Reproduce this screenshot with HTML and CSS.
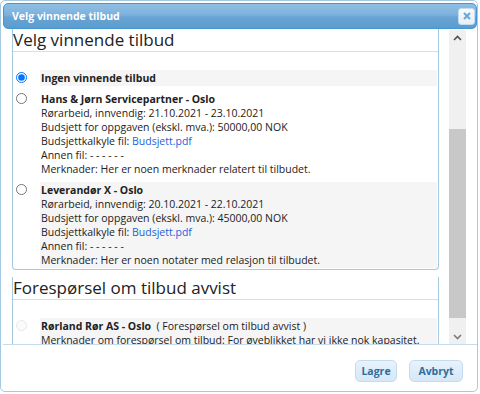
FILE: index.html
```html
<!DOCTYPE html>
<html lang="no">
<head>
  <meta charset="UTF-8">
  <title>Velg vinnende tilbud</title>
  <link rel="stylesheet" href="styles.css">
</head>
<body>
  <div class="dialog">
    <div class="titlebar">
      <span class="title">Velg vinnende tilbud</span>
      <button class="close" title="Lukk">
        <svg width="8" height="8" viewBox="0 0 8 8"><path d="M1 1L7 7M7 1L1 7" stroke="#6aa5d6" stroke-width="2"/></svg>
      </button>
    </div>

    <div class="body">
      <div class="scroll">
        <div class="group">
          <h2>Velg vinnende tilbud</h2>

          <div class="offer">
            <div class="pick"><input type="radio" name="winner" checked></div>
            <div class="info alt"><b>Ingen vinnende tilbud</b></div>
          </div>

          <div class="offer">
            <div class="pick"><input type="radio" name="winner"></div>
            <div class="info">
              <b>Hans &amp; Jørn Servicepartner - Oslo</b>
              <div>Rørarbeid, innvendig: 21.10.2021 - 23.10.2021</div>
              <div>Budsjett for oppgaven (ekskl. mva.): 50000,00 NOK</div>
              <div>Budsjettkalkyle fil: <a href="#">Budsjett.pdf</a></div>
              <div>Annen fil: - - - - - -</div>
              <div>Merknader: Her er noen merknader relatert til tilbudet.</div>
            </div>
          </div>

          <div class="offer">
            <div class="pick"><input type="radio" name="winner"></div>
            <div class="info alt">
              <b>Leverandør X - Oslo</b>
              <div>Rørarbeid, innvendig: 20.10.2021 - 22.10.2021</div>
              <div>Budsjett for oppgaven (ekskl. mva.): 45000,00 NOK</div>
              <div>Budsjettkalkyle fil: <a href="#">Budsjett.pdf</a></div>
              <div>Annen fil: - - - - - -</div>
              <div>Merknader: Her er noen notater med relasjon til tilbudet.</div>
            </div>
          </div>
        </div>

        <div class="group">
          <h2>Forespørsel om tilbud avvist</h2>

          <div class="offer">
            <div class="pick"><input type="radio" disabled></div>
            <div class="info alt">
              <b>Rørland Rør AS - Oslo</b>&nbsp; ( Forespørsel om tilbud avvist )
              <div>Merknader om forespørsel om tilbud: For øyeblikket har vi ikke nok kapasitet.</div>
            </div>
          </div>
        </div>
      </div>

      <div class="scrollbar">
        <div class="sb-btn">
          <svg width="9" height="6" viewBox="0 0 9 6"><path d="M1 5L4.5 1.5L8 5" fill="none" stroke="#505050" stroke-width="1.6"/></svg>
        </div>
        <div class="sb-track"><div class="sb-thumb"></div></div>
        <div class="sb-btn">
          <svg width="9" height="6" viewBox="0 0 9 6"><path d="M1 1L4.5 4.5L8 1" fill="none" stroke="#7a7a7a" stroke-width="1.6"/></svg>
        </div>
      </div>
    </div>

    <div class="buttonpane">
      <button class="btn save">Lagre</button>
      <button class="btn cancel">Avbryt</button>
    </div>
  </div>
</body>
</html>
```

FILE: styles.css
```css
* {
  box-sizing: border-box;
}
body {
  margin: 0;
  background-color: #fff;
  font-family: "Open Sans", "DejaVu Sans", sans-serif;
  font-size: 10.5px;
  color: #222;
}
.dialog {
  width: 478px;
  height: 392px;
  border: 1px solid #a6c9e2;
  border-radius: 5px;
  padding: 2px 0 0 2px;
  display: flex;
  flex-direction: column;
  overflow: hidden;
}
.titlebar {
  height: 26px;
  flex: none;
  border: 1px solid #4297d7;
  border-radius: 5px;
  background: linear-gradient(#8fbee4 0%, #7db2de 45%, #68a4d5 55%, #5c9ccc 100%);
  color: #fff;
  font-weight: bold;
  display: flex;
  align-items: center;
  justify-content: space-between;
  padding: 0 1px 0 8px;
}
.close {
  width: 17px;
  height: 17px;
  padding: 0;
  border: 1px solid #c5dbec;
  border-radius: 3px;
  background: linear-gradient(#f6fafd, #e6f0f9);
  display: flex;
  align-items: center;
  justify-content: center;
}
.body {
  flex: 1;
  min-height: 0;
  display: flex;
}
.scroll {
  flex: 1;
  overflow: hidden;
  padding: 0 10px 0 9px;
}
.group {
  margin-top: 16px;
  border: 1px solid #a6c9e2;
  border-top: none;
  border-radius: 0 0 4px 4px;
  padding-bottom: 1px;
}
.group + .group {
  margin-top: 23px;
}
h2 {
  margin: -16px 0 18px;
  height: 23px;
  line-height: 22px;
  font-size: 17px;
  font-weight: normal;
  color: #222;
  border-bottom: 1px solid #ddd;
  white-space: nowrap;
}
.offer {
  display: flex;
  line-height: 14px;
}
.offer + .offer {
  margin-top: 5px;
}
.pick {
  width: 27px;
  flex: none;
  padding: 2px 0 0 3px;
}
.pick input {
  width: 11px;
  height: 11px;
  margin: 0;
}
.pick input:disabled {
  opacity: 0.45;
}
.info {
  flex: 1;
  padding: 1px 0 1px 1px;
  margin-right: 1px;
}
.info.alt {
  background-color: #f5f5f5;
}
.info a {
  color: #1b5fdc;
  text-decoration: none;
}
.scrollbar {
  width: 17px;
  flex: none;
  margin: 1px 11px 0 0;
  background-color: #f0f0f0;
  display: flex;
  flex-direction: column;
}
.sb-btn {
  height: 15px;
  display: flex;
  align-items: center;
  justify-content: center;
}
.sb-track {
  flex: 1;
}
.sb-thumb {
  margin-top: 84px;
  height: 189px;
  background-color: #c8c8c8;
}
.buttonpane {
  height: 47px;
  flex: none;
  border-top: 1px solid #c5dbec;
  display: flex;
  justify-content: flex-end;
  align-items: flex-start;
  gap: 12px;
  padding: 15px 14px 0 0;
}
.btn {
  height: 22px;
  padding: 0;
  border: 1px solid #c5dbec;
  border-radius: 5px;
  background: linear-gradient(#e7f2fc, #d6e7f7);
  color: #2e6e9e;
  font-family: inherit;
  font-size: 10.5px;
  font-weight: bold;
}
.save {
  width: 42px;
}
.cancel {
  width: 54px;
}
```
